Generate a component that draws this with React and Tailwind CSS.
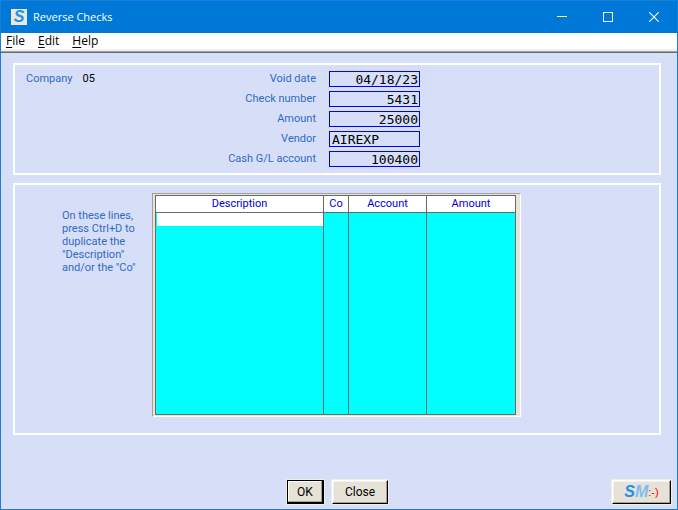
import { Fragment } from "react";

const fields = [
  { id: "void-date", label: "Void date", value: "04/18/23" },
  { id: "check-number", label: "Check number", value: "5431" },
  { id: "amount", label: "Amount", value: "25000" },
  { id: "vendor", label: "Vendor", value: "AIREXP", left: true },
  { id: "gl-account", label: "Cash G/L account", value: "100400" },
];

const columns = ["Description", "Co", "Account", "Amount"];
const emptyRows = Array.from({ length: 14 }, (_, i) => i);

const TitleBar = () => {
  return (
    <header className="flex h-8 items-center bg-[#0078d7] text-white">
      <span className="ml-2.5 flex h-4 w-4 items-center justify-center bg-[#ece9d8] font-['Liberation_Sans',sans-serif] text-[16px] leading-4 font-bold text-[#1e90f0] italic">
        S
      </span>
      <h1 className="ml-1.5 flex-1 font-['Open_Sans',sans-serif] text-[11px]">Reverse Checks</h1>
      <button aria-label="Minimize" className="flex h-8 w-[46px] items-center justify-center">
        <svg width="10" height="10" shapeRendering="crispEdges">
          <path d="M0 4.5H10" stroke="white" />
        </svg>
      </button>
      <button aria-label="Maximize" className="flex h-8 w-[46px] items-center justify-center">
        <svg width="10" height="10" shapeRendering="crispEdges">
          <rect x="0.5" y="0.5" width="9" height="9" fill="none" stroke="white" />
        </svg>
      </button>
      <button aria-label="Close window" className="flex h-8 w-[46px] items-center justify-center">
        <svg width="10" height="10">
          <path d="M0.3 0.3L9.7 9.7M9.7 0.3L0.3 9.7" stroke="white" strokeWidth="1.1" />
        </svg>
      </button>
    </header>
  );
};

const MenuBar = () => {
  return (
    <nav className="flex h-5 gap-[13px] border-b border-[#696969] bg-white pl-[5px] font-['Open_Sans',sans-serif] text-[12px] leading-4 text-black shadow-[inset_0_-1px_#a0a0a0,inset_0_-3px_#f0f0f0]">
      <button className="h-4"><u className="underline-offset-2">F</u>ile</button>
      <button className="h-4"><u className="underline-offset-2">E</u>dit</button>
      <button className="h-4"><u className="underline-offset-2">H</u>elp</button>
    </nav>
  );
};

const CheckDetails = () => {
  return (
    <section className="flex items-start border-2 border-white px-[11px] py-1.5">
      <div className="flex w-[180px] gap-2.5 leading-4">
        <span>Company</span>
        <span className="text-black">05</span>
      </div>
      <div className="grid grid-cols-[110px_91px] gap-x-[13px] gap-y-1">
        {fields.map((f) => (
          <Fragment key={f.id}>
            <label htmlFor={f.id} className="h-4 text-right leading-4">
              {f.label}
            </label>
            <input
              id={f.id}
              defaultValue={f.value}
              className={`h-4 w-full border border-[#0000ff] bg-transparent font-['DejaVu_Sans_Mono',monospace] text-[13px] leading-[14px] text-black outline-none ${
                f.left ? "pl-0.5 text-left" : "pr-px text-right"
              }`}
            />
          </Fragment>
        ))}
      </div>
    </section>
  );
};

const Distribution = () => {
  return (
    <section className="mt-2 flex items-start border-2 border-white pt-2 pb-4 pl-[47px]">
      <p className="mt-4 w-[90px] leading-[13px]">
        On these lines,
        <br />
        press Ctrl+D to
        <br />
        duplicate the
        <br />
        "Description"
        <br />
        and/or the "Co"
      </p>
      <div className="border border-t-[#a0a0a0] border-r-white border-b-white border-l-[#a0a0a0] bg-[#e8e4d8] pt-px pr-1 pb-px pl-0.5">
        <table className="table-fixed border-separate border-spacing-0 border-t border-l border-[#696969] bg-[#00ffff]">
          <colgroup>
            <col className="w-[168px]" />
            <col className="w-[25px]" />
            <col className="w-[78px]" />
            <col className="w-[89px]" />
          </colgroup>
          <thead>
            <tr>
              {columns.map((c) => (
                <th
                  key={c}
                  className="h-[17px] border-r border-b border-[#696969] bg-white p-0 text-center leading-4 font-normal text-[#0000e0]"
                >
                  {c}
                </th>
              ))}
            </tr>
          </thead>
          <tbody>
            <tr>
              <td className="h-[13px] border-r border-[#696969] p-0 pl-px">
                <input aria-label="Description" className="block h-[13px] w-full bg-white outline-none" />
              </td>
              <td className="border-r border-[#696969] p-0" />
              <td className="border-r border-[#696969] p-0" />
              <td className="border-r border-[#696969] p-0" />
            </tr>
            {emptyRows.map((r) => (
              <tr key={r}>
                {columns.map((c) => (
                  <td key={c} className="h-[13px] border-r border-[#696969] p-0" />
                ))}
              </tr>
            ))}
            <tr>
              {columns.map((c) => (
                <td key={c} className="h-[7px] border-r border-b border-[#696969] p-0" />
              ))}
            </tr>
          </tbody>
        </table>
      </div>
    </section>
  );
};

const raised =
  "h-6 border border-t-white border-r-black border-b-black border-l-white bg-[#e6e2d6] text-black shadow-[inset_-1px_-1px_#a0a0a0,inset_1px_1px_#f4f2ea,0_0_0_1px_#f0ede6]";

const Footer = () => {
  return (
    <footer className="mt-auto grid grid-cols-[1fr_auto_1fr] pt-6 pr-1.5 pb-[5px] pl-[3px]">
      <div className="col-start-2 flex gap-2 text-[12px]">
        <button className="h-6 w-[37px] border border-r-2 border-b-2 border-black bg-[#e6e2d6] text-black shadow-[inset_-1px_-1px_#a0a0a0,inset_1px_1px_#ffffff,0_0_0_1px_#f0ede6]">
          OK
        </button>
        <button className={`${raised} w-14`}>Close</button>
      </div>
      <button
        className={`${raised} flex w-[59px] items-center justify-center justify-self-end font-['Liberation_Sans',sans-serif] font-bold`}
      >
        <span className="text-[16px] text-[#1e90f0] italic">S</span>
        <span className="text-[16px] text-[#7cbcf2] italic">M</span>
        <span className="text-[11px] font-normal text-[#ff0000]">:-)</span>
      </button>
    </footer>
  );
};

export default function App() {
  return (
    <div className="flex min-h-screen flex-col border border-[#1a80d4] bg-[#d6dff7] font-['Roboto',sans-serif] text-[11px] text-[#316ac5]">
      <TitleBar />
      <MenuBar />
      <main className="pt-2.5 pr-4 pl-3">
        <CheckDetails />
        <Distribution />
      </main>
      <Footer />
    </div>
  );
}
